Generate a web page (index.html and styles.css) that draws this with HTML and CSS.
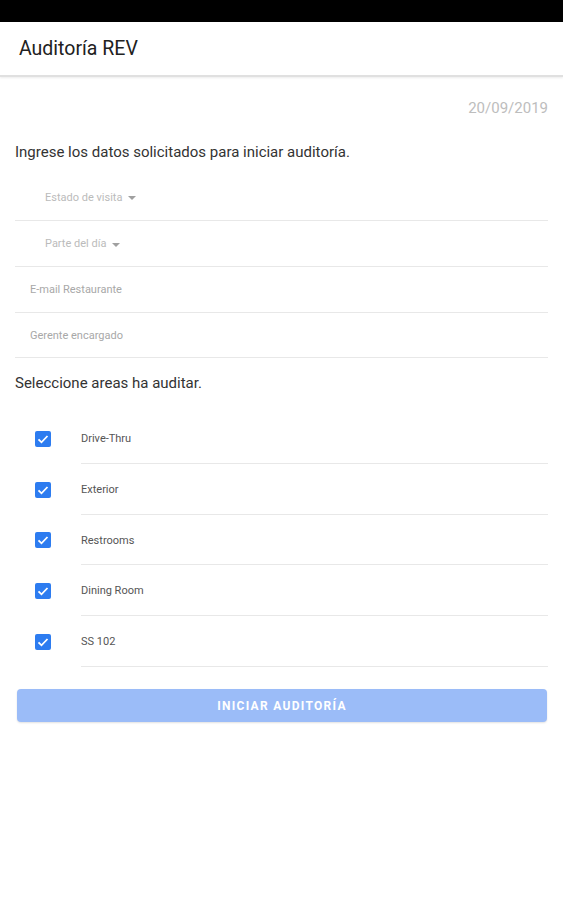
FILE: index.html
```html
<!DOCTYPE html>
<html lang="es">
<head>
    <meta charset="UTF-8">
    <meta name="viewport" content="width=device-width, initial-scale=1.0">
    <title>Auditoría REV</title>
    <link rel="stylesheet" href="styles.css">
</head>
<body>
    <div class="status-bar"></div>

    <header class="app-bar">
        <h1 class="app-title">Auditoría REV</h1>
    </header>

    <main class="content">
        <div class="date">20/09/2019</div>

        <p class="section-text intro">Ingrese los datos solicitados para iniciar auditoría.</p>

        <!-- Datos de la visita -->
        <div class="fields">
            <div class="field select-field">
                <span class="placeholder">Estado de visita</span>
                <span class="caret"></span>
            </div>
            <div class="field select-field">
                <span class="placeholder">Parte del día</span>
                <span class="caret"></span>
            </div>
            <div class="field input-field">
                <span class="placeholder">E-mail Restaurante</span>
            </div>
            <div class="field input-field">
                <span class="placeholder">Gerente encargado</span>
            </div>
        </div>

        <p class="section-text areas-title">Seleccione areas ha auditar.</p>

        <!-- Areas -->
        <ul class="area-list">
            <li class="area-item">
                <span class="checkbox"><svg viewBox="0 0 16 16"><path d="M3.5 8.3l3 3 6-6.3"/></svg></span>
                <span class="area-label">Drive-Thru</span>
            </li>
            <li class="area-item">
                <span class="checkbox"><svg viewBox="0 0 16 16"><path d="M3.5 8.3l3 3 6-6.3"/></svg></span>
                <span class="area-label">Exterior</span>
            </li>
            <li class="area-item">
                <span class="checkbox"><svg viewBox="0 0 16 16"><path d="M3.5 8.3l3 3 6-6.3"/></svg></span>
                <span class="area-label">Restrooms</span>
            </li>
            <li class="area-item">
                <span class="checkbox"><svg viewBox="0 0 16 16"><path d="M3.5 8.3l3 3 6-6.3"/></svg></span>
                <span class="area-label">Dining Room</span>
            </li>
            <li class="area-item">
                <span class="checkbox"><svg viewBox="0 0 16 16"><path d="M3.5 8.3l3 3 6-6.3"/></svg></span>
                <span class="area-label">SS 102</span>
            </li>
        </ul>

        <button class="start-button" disabled>INICIAR AUDITORÍA</button>
    </main>
</body>
</html>
```

FILE: styles.css
```css
body {
    font-family: Roboto, 'Noto Sans', sans-serif;
    background-color: white;
    margin: 0;
    width: 563px;
    min-height: 900px;
}

.status-bar {
    height: 22px;
    background-color: #000;
}

.app-bar {
    height: 53px;
    display: flex;
    align-items: center;
    padding: 0 19px;
    border-bottom: 2px solid #e0e0e0;
    box-shadow: 0 1px 2px rgba(0,0,0,0.08);
}

.app-title {
    margin: 0;
    font-size: 19.5px;
    font-weight: 400;
    color: #212121;
}

.content {
    padding: 0 15px;
}

.date {
    text-align: right;
    color: #bdbdbd;
    font-size: 15px;
    margin-top: 22px;
    line-height: 18px;
}

.section-text {
    margin: 0;
    font-size: 15px;
    color: #333;
    line-height: 18px;
}

.intro {
    margin-top: 26px;
}

.fields {
    margin-top: 13px;
}

.field {
    box-sizing: border-box;
    height: 46px;
    border-bottom: 1px solid #e8e8e8;
    display: flex;
    align-items: center;
    font-size: 11px;
    color: #bbb;
}

.field:first-child {
    height: 47px;
}

.field:last-child {
    height: 45px;
}

.select-field {
    padding-left: 30px;
}

.input-field {
    padding-left: 15px;
    color: #a8a8a8;
}

.caret {
    display: inline-block;
    width: 0;
    height: 0;
    margin-left: 6px;
    margin-top: 2px;
    border-left: 4px solid transparent;
    border-right: 4px solid transparent;
    border-top: 4px solid #a0a0a0;
}

.areas-title {
    margin-top: 16px;
}

.area-list {
    list-style: none;
    margin: 21px 0 0;
    padding: 0;
}

.area-item {
    height: 51px;
    display: flex;
    align-items: stretch;
}

.area-item:nth-child(3) {
    height: 50px;
}

.checkbox {
    width: 16px;
    height: 16px;
    align-self: center;
    margin: 0 30px 0 20px;
    background-color: #2d7cf0;
    border-radius: 2px;
    display: flex;
    flex-shrink: 0;
}

.checkbox svg {
    width: 16px;
    height: 16px;
    fill: none;
    stroke: white;
    stroke-width: 1.8;
}

.area-label {
    flex: 1;
    display: flex;
    align-items: center;
    padding-top: 1px;
    border-bottom: 1px solid #e8e8e8;
    font-size: 11px;
    color: #555;
}

.start-button {
    display: block;
    width: 530px;
    height: 33px;
    margin: 22px 0 0 2px;
    border: none;
    border-radius: 4px;
    background-color: #9bbcf8;
    color: white;
    font-family: Roboto, 'Noto Sans', sans-serif;
    font-size: 12px;
    font-weight: 700;
    letter-spacing: 1.3px;
    box-shadow: 0 1px 2px rgba(0,0,0,0.12);
}
```
